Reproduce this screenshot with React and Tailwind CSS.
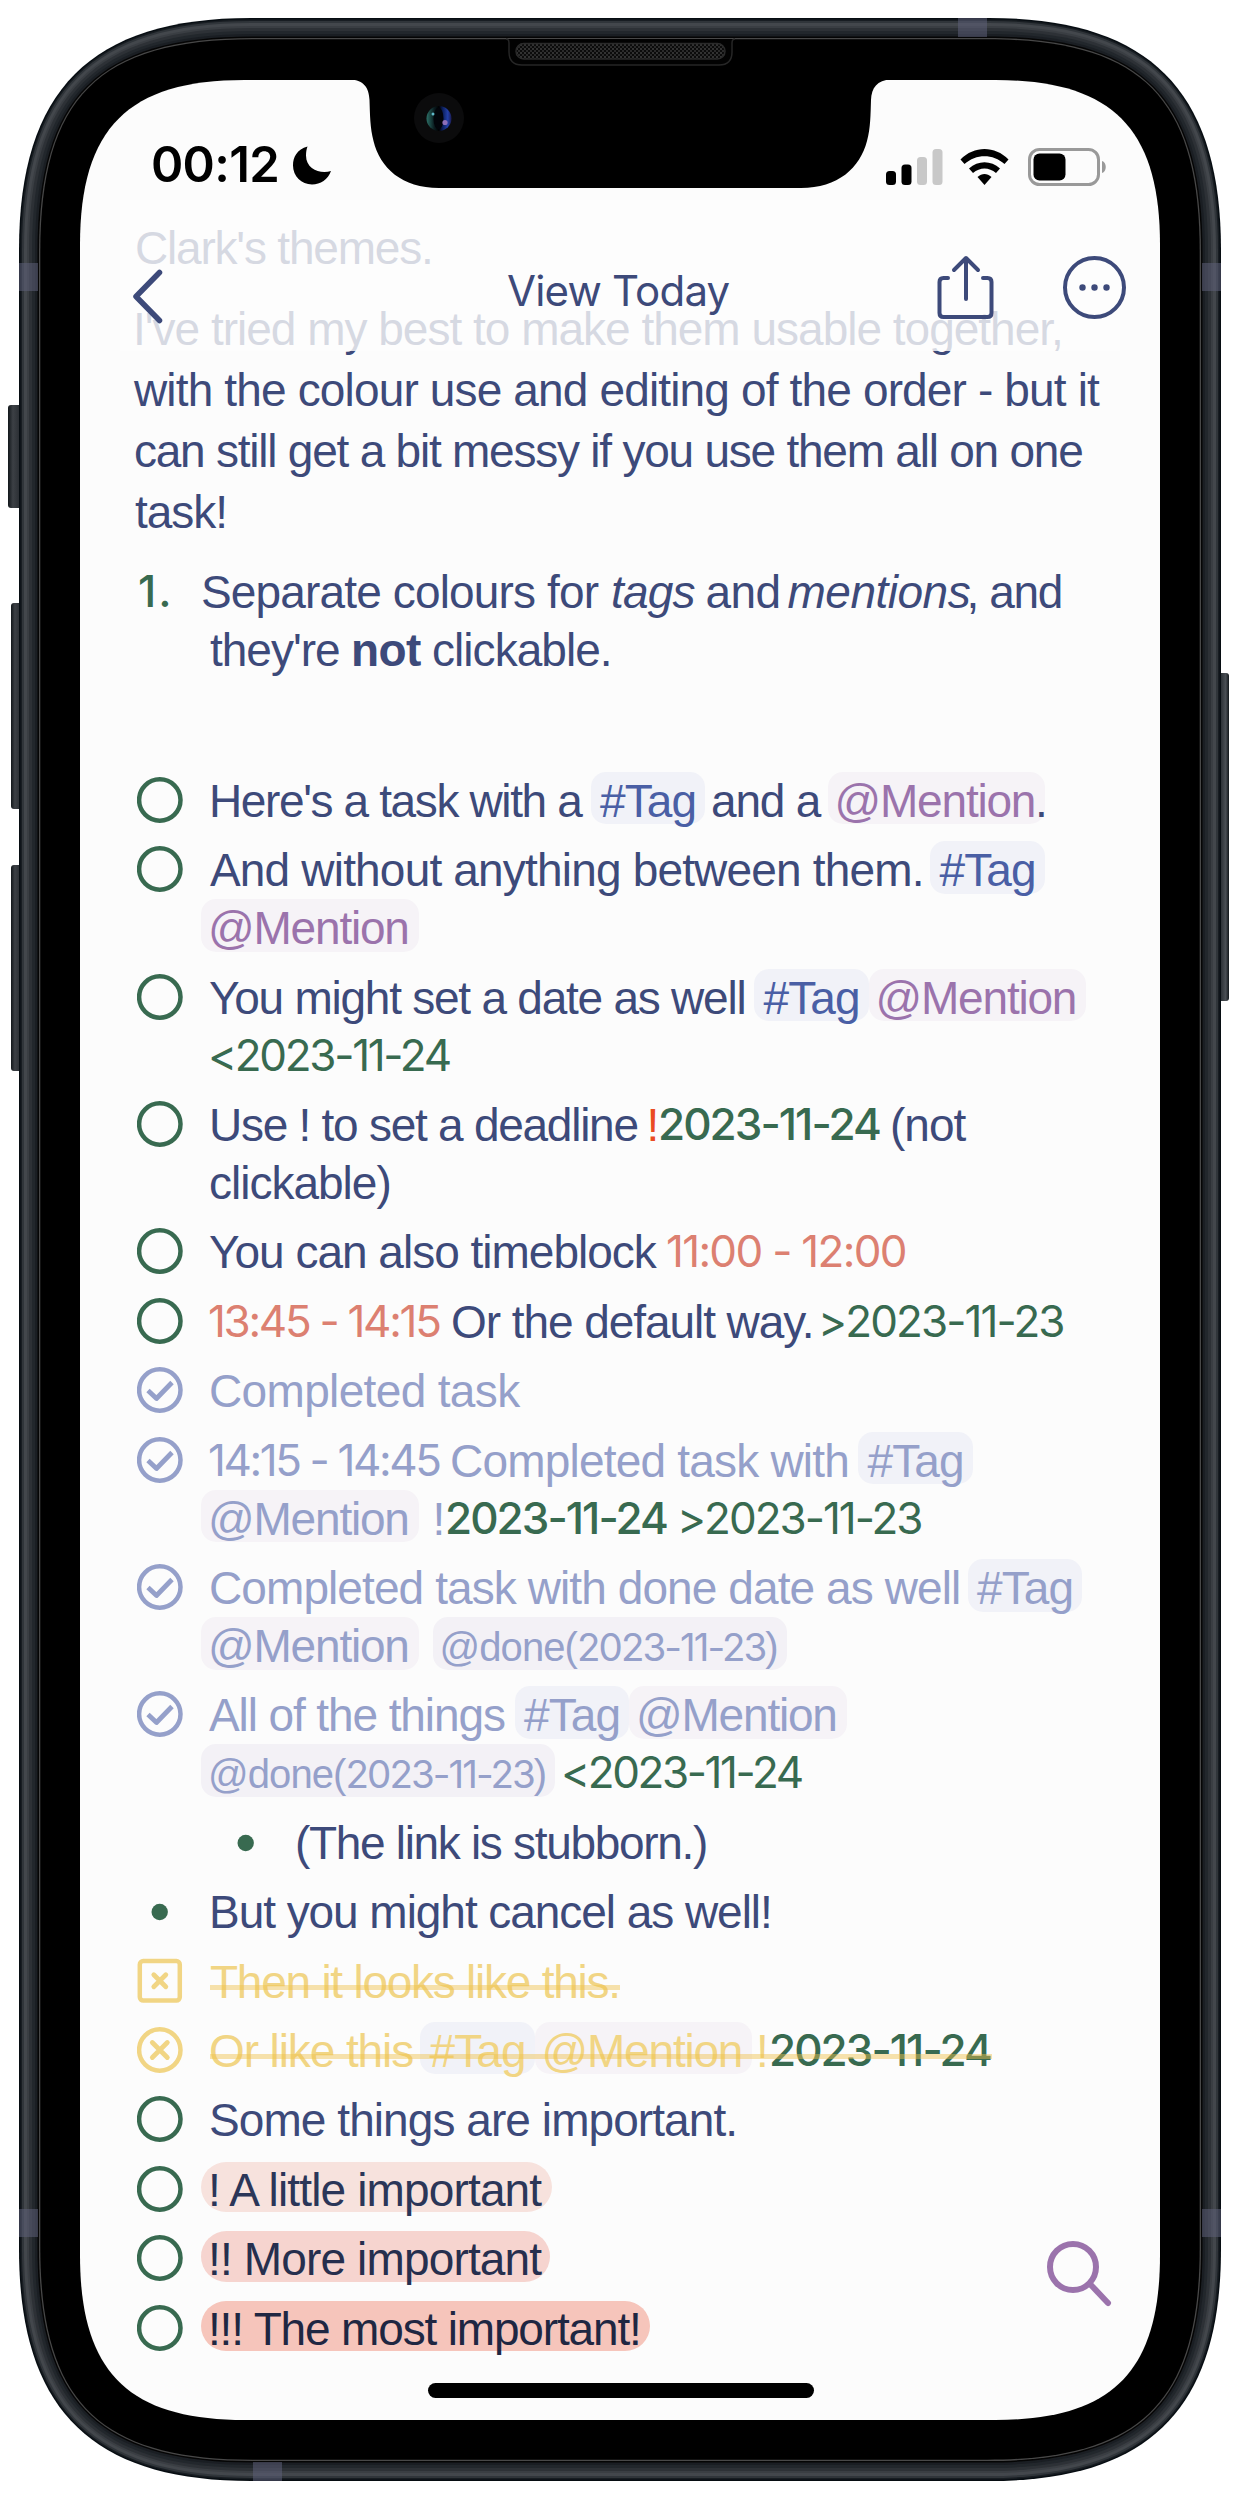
// Closed outline with continuous (squircle) corners.
function squircle(l, t, r, b, e, c) {
  return [
    `M${l + e} ${t}H${r - e}`,
    `C${r - c} ${t} ${r} ${t + c} ${r} ${t + e}`,
    `V${b - e}`,
    `C${r} ${b - c} ${r - c} ${b} ${r - e} ${b}`,
    `H${l + e}`,
    `C${l + c} ${b} ${l} ${b - c} ${l} ${b - e}`,
    `V${t + e}`,
    `C${l} ${t + c} ${l + c} ${t} ${l + e} ${t}Z`,
  ].join("");
}

const SANS = "font-['Liberation_Sans',Arial,sans-serif]";

const RINGS = [
  [0, "#070d12"],
  [1.5, "#181d22"],
  [3, "#30353a"],
  [5, "#43474c"],
  [8, "#3a3e43"],
  [10, "#2d3136"],
  [13, "#22272c"],
  [16, "#1a1e23"],
  [18.5, "#050505"],
  [20, "#484848"],
  [21.3, "#000000"],
];

function Chassis() {
  return (
    <svg className="absolute inset-0" width="1240" height="2500" viewBox="0 0 1240 2500" aria-hidden="true">
      <defs>
        <linearGradient id="btnL" x1="0" x2="1" y1="0" y2="0">
          <stop offset="0" stopColor="#12171b" />
          <stop offset=".35" stopColor="#3c4045" />
          <stop offset="1" stopColor="#24282d" />
        </linearGradient>
        <linearGradient id="btnR" x1="1" x2="0" y1="0" y2="0">
          <stop offset="0" stopColor="#12171b" />
          <stop offset=".3" stopColor="#4a4f55" />
          <stop offset="1" stopColor="#1a1f24" />
        </linearGradient>
        <linearGradient id="lens" x1="0" x2="1" y1="0" y2="0">
          <stop offset="0" stopColor="#2c6f66" />
          <stop offset=".3" stopColor="#0a1c20" />
          <stop offset=".5" stopColor="#000000" />
          <stop offset=".65" stopColor="#0b1f5c" />
          <stop offset=".85" stopColor="#2340a8" />
          <stop offset="1" stopColor="#1a1a50" />
        </linearGradient>
        <pattern id="mesh" width="4" height="4" patternUnits="userSpaceOnUse">
          <rect width="4" height="4" fill="#0b0b0b" />
          <rect width="2" height="2" fill="#323232" />
          <rect x="2" y="2" width="2" height="2" fill="#2a2a2a" />
        </pattern>
      </defs>
      <rect x="8" y="405" width="14" height="103" rx="3" fill="url(#btnL)" />
      <rect x="11" y="603" width="11" height="206" rx="3" fill="url(#btnL)" />
      <rect x="11" y="865" width="11" height="206" rx="3" fill="url(#btnL)" />
      <rect x="1218" y="673" width="11" height="328" rx="3" fill="url(#btnR)" />
      {RINGS.map(([i, fill]) => (
        <path key={i} fill={fill} d={squircle(19 + i, 18 + i, 1221 - i, 2481 - i, 232 - i * 0.9, 72 - i * 0.65)} />
      ))}
      <g fill="#5c5f78" fillOpacity=".55">
        <rect x="19" y="263" width="19" height="28" />
        <rect x="1202" y="263" width="19" height="28" />
        <rect x="19" y="2209" width="19" height="28" />
        <rect x="1202" y="2209" width="19" height="28" />
        <rect x="958" y="18" width="29" height="19" />
        <rect x="253" y="2462" width="29" height="19" />
      </g>
      <path fill="#fcfcfc" d={squircle(80, 80, 1160, 2420, 165, 48)} />
      <path
        fill="#000"
        d="M350 79.500C364 80 369 88 369.500 100C370 115 370 128 373.500 141C380 168 402 188 439 188H801C838 188 860 168 867 141C870.500 128 870.500 115 871 100C871.500 88 877 80 891 79.500Z"
      />
      <path d="M506 39Q509 39 509 43V52Q509 65 522 65H719Q732 65 732 52V43Q732 39 735 39" fill="#020202" stroke="#262626" strokeWidth="1.500" />
      <rect x="516" y="43.500" width="209" height="15.500" rx="7.750" fill="url(#mesh)" stroke="#2a2a2a" strokeWidth="1.500" />
      <circle cx="439" cy="118" r="25" fill="#0b0b0c" />
      <circle cx="439" cy="118.500" r="12.500" fill="url(#lens)" />
      <ellipse cx="438.500" cy="118.500" rx="5" ry="11" fill="#02040a" />
      <circle cx="445" cy="122.500" r="2.600" fill="#8d6fb8" />
      <circle cx="433" cy="114" r="1.500" fill="#5fb8c8" />
    </svg>
  );
}

function StatusBar() {
  return (
    <div className="flex h-[110px] items-end justify-between pl-[71px] pr-[54px]">
      <div className="flex h-[50px] items-center gap-[14px] text-black">
        <span className="w-[127px] whitespace-nowrap font-['Inter',sans-serif] text-[49px] leading-[50px] font-semibold tracking-[-0.700px]">00:12</span>
        <svg width="40" height="40" viewBox="0 0 40 40" className="mt-[2px]">
          <path d="M15.500 0.500C5 3.500 1 11 1 19.500C1 30 9.500 38.500 20 38.500C28.500 38.500 36 33.500 39 25C29 28.500 14 23.500 14 9.500C14 6 14.500 3 15.500 0.500Z" fill="#000" />
        </svg>
      </div>
      <div className="flex h-[47px] items-center">
        <svg width="222" height="40" viewBox="0 0 222 40">
          <rect x="2" y="24" width="10" height="14" rx="3.500" />
          <rect x="17.500" y="17.500" width="10" height="20.500" rx="3.500" />
          <rect x="33" y="10" width="10" height="28" rx="3.500" fill="#c8c8c8" />
          <rect x="48.500" y="2" width="10" height="36" rx="3.500" fill="#c8c8c8" />
          <path d="M76.500 12.500L80.500 17C92 6.500 109 6.500 120.500 17L124.500 12.500C111 -1.500 90 -1.500 76.500 12.500Z" />
          <path d="M85 21.500L89 26C96 20 105 20 112 26L116 21.500C107 13 94 13 85 21.500Z" />
          <path d="M93.500 30C98 26 103 26 107.500 30L100.500 38Z" />
          <rect x="145.500" y="2.500" width="69" height="35" rx="10" fill="none" stroke="#999" strokeWidth="3" />
          <rect x="149.500" y="6.500" width="32" height="27" rx="6" />
          <path d="M218 14C223 15 223 25 218 26Z" fill="#999" />
        </svg>
      </div>
    </div>
  );
}

function NavBar() {
  return (
    <div className="flex h-[161px] items-start text-[#3d4a7a]">
      <svg className="mt-[79px] ml-[50px]" width="36" height="56" viewBox="0 0 36 56" fill="none" stroke="currentColor" strokeWidth="5.500" strokeLinecap="round" strokeLinejoin="round">
        <path d="M29.500 3.500L6 27.500L29.500 51.500" />
      </svg>
      <h1 className="mt-[75px] ml-[341px] w-[430px] whitespace-nowrap font-['Inter',sans-serif] text-[42px] leading-[52px] tracking-[-0.800px]">View Today</h1>
      <svg className="mt-[64px]" width="58" height="68" viewBox="0 0 58 68" fill="none" stroke="currentColor" strokeWidth="4" strokeLinecap="round" strokeLinejoin="round">
        <path d="M11 24H6.500Q2.500 24 2.500 28V59Q2.500 63 6.500 63H50.500Q54.500 63 54.500 59V28Q54.500 24 50.500 24H46" />
        <path d="M29 45V5M17 16L29 4L41 16" />
      </svg>
      <svg className="mt-[64px] ml-[67px]" width="66" height="68" viewBox="0 0 66 68" fill="none" stroke="currentColor" strokeWidth="4">
        <circle cx="32.500" cy="33.500" r="29.500" />
        <g fill="currentColor" stroke="none">
          <circle cx="20.500" cy="33.500" r="3.200" />
          <circle cx="32.500" cy="33.500" r="3.200" />
          <circle cx="44.500" cy="33.500" r="3.200" />
        </g>
      </svg>
    </div>
  );
}

const OpenCircle = () => (
  <svg width="46" height="46" viewBox="0 0 46 46" fill="none" stroke="#386a50" strokeWidth="4.500">
    <circle cx="22.800" cy="23" r="20.700" />
  </svg>
);

const DoneCircle = () => (
  <svg width="46" height="46" viewBox="0 0 46 46" fill="none" stroke="#95a0ca" strokeWidth="4.500">
    <circle cx="22.800" cy="23" r="20.700" />
    <path d="M11 23.500L19.500 31.500L35 15.500" strokeWidth="4.800" strokeLinejoin="round" />
  </svg>
);

const CancelCircle = () => (
  <svg width="46" height="46" viewBox="0 0 46 46" fill="none" stroke="#f1d584" strokeWidth="4.500">
    <circle cx="22.800" cy="23" r="20.700" />
    <path d="M15.300 15.500L30.300 30.500M30.300 15.500L15.300 30.500" strokeWidth="4.800" strokeLinecap="round" />
  </svg>
);

const CancelSquare = () => (
  <svg width="46" height="46" viewBox="0 0 46 46" fill="none" stroke="#f1d584" strokeWidth="4.500">
    <rect x="2.800" y="3.100" width="40" height="39.500" rx="3.500" />
    <path d="M16.800 16.800L28.800 28.800M28.800 16.800L16.800 28.800" strokeWidth="4.800" strokeLinecap="round" />
  </svg>
);

const Dot = () => (
  <svg width="46" height="46" viewBox="0 0 46 46" fill="#386a50">
    <circle cx="22.700" cy="24" r="8.200" />
  </svg>
);

const T = ({ c = "", children }) => <span className={`block shrink-0 ${c}`}>{children}</span>;

const D = ({ c = "", children }) => (
  <span className={`-mt-px block shrink-0 font-['Inter',sans-serif] text-[44px] ${c}`}>{children}</span>
);

const Tag = ({ c = "text-[#4a5fa5]" }) => (
  <span className={`block h-[52.5px] w-[114.5px] shrink-0 rounded-[15px] bg-[#f1f2f8] pl-[9.5px] tracking-[-0.9px] ${c}`}>#Tag</span>
);

const Mention = ({ c = "text-[#9b73ac]" }) => (
  <span className={`block h-[52.5px] w-[217.5px] shrink-0 rounded-[15px] bg-[#f6f3f7] pl-[7px] tracking-[-1.2px] ${c}`}>@Mention</span>
);

const DoneDate = () => (
  <span className="flex h-[53px] w-[354px] shrink-0 rounded-[15px] bg-[#f3f1f6] pl-[7px]">
    <span className="block text-[40px] leading-[61px] tracking-[-0.9px]">@done(</span>
    <span className="block font-['Inter',sans-serif] text-[38.5px] leading-[60px] tracking-[-1.95px]">2023-11-23</span>
    <span className="block text-[40px] leading-[61px]">)</span>
  </span>
);

const Line = ({ c = "", children }) => <div className={`flex h-[58px] items-start ${c}`}>{children}</div>;

const Item = ({ icon, c = "", children }) => (
  <li className={`flex items-start ${c}`}>
    <span className="mt-[5px] mr-[25px] block shrink-0">{icon}</span>
    <div className="flex flex-col">{children}</div>
  </li>
);

const GREEN = "text-[#386a50]";

function Note() {
  return (
    <div className={`pt-[138.4px] pl-[57px] text-[46px] whitespace-nowrap text-[#3d4a7a] ${SANS}`}>
      <div className="-ml-[2px] leading-[61px]">
        <p className="tracking-[-1.2px]">Clark's themes.</p>
        <p className="mt-[20px] flex flex-col">
          <span className="-ml-[2px] tracking-[-1px]">I've tried my best to make them usable together,</span>
          <span className="-ml-px tracking-[-0.85px]">with the colour use and editing of the order - but it</span>
          <span className="-ml-px tracking-[-1.23px]">can still get a bit messy if you use them all on one</span>
          <span className="tracking-[-1px]">task!</span>
        </p>
      </div>
      <div className="mt-[19.5px] leading-[58px]">
        <Line>
          <D c={`w-[64px] pl-px font-medium tracking-[2px] ${GREEN}`}>1.</D>
          <T c="w-[410px] tracking-[-0.85px]">Separate colours for</T>
          <T c="w-[94.5px] italic tracking-[-0.8px]">tags</T>
          <T c="w-[82px] tracking-[-0.6px]">and</T>
          <T c="w-[179px] italic tracking-[-0.5px]">mentions</T>
          <T c="tracking-[-1.4px]">, and</T>
        </Line>
        <Line c="pl-[73px]">
          <T c="w-[141px] tracking-[-1px]">they're</T>
          <T c="w-[81px] font-bold tracking-[-0.6px]">not</T>
          <T c="tracking-[-0.95px]">clickable.</T>
        </Line>
      </div>
      <ul className="mt-[93px] flex flex-col gap-[11.4px] leading-[58px]">
        <Item icon={<OpenCircle />}>
          <Line>
            <T c="w-[382.5px] pl-px tracking-[-1.38px]">Here's a task with a</T>
            <Tag />
            <T c="w-[122.5px] pl-[6px] tracking-[-1.2px]">and a</T>
            <Mention />
            <T c="-ml-[10px]">.</T>
          </Line>
        </Item>
        <Item icon={<OpenCircle />}>
          <Line>
            <T c="w-[722px] pl-[2px] tracking-[-0.82px]">And without anything between them.</T>
            <Tag />
          </Line>
          <Line c="-ml-[7px]">
            <Mention />
          </Line>
        </Item>
        <Item icon={<OpenCircle />}>
          <Line>
            <T c="w-[546px] pl-px tracking-[-1.24px]">You might set a date as well</T>
            <Tag />
            <Mention />
          </Line>
          <Line>
            <D c={`tracking-[-2.3px] ${GREEN}`}>&lt;2023-11-24</D>
          </Line>
        </Item>
        <Item icon={<OpenCircle />}>
          <Line>
            <T c="w-[438.5px] pl-px tracking-[-1.26px]">Use ! to set a deadline</T>
            <T c="w-[11.5px] text-[#ea4b22]">!</T>
            <D c={`w-[232px] font-medium tracking-[-1.95px] ${GREEN}`}>2023-11-24</D>
            <T c="tracking-[-1px]">(not</T>
          </Line>
          <Line>
            <T c="pl-px tracking-[-1px]">clickable)</T>
          </Line>
        </Item>
        <Item icon={<OpenCircle />}>
          <Line>
            <T c="w-[458px] pl-px tracking-[-1px]">You can also timeblock</T>
            <D c="tracking-[-1.7px] text-[#dc8071]">11:00 - 12:00</D>
          </Line>
        </Item>
        <Item icon={<OpenCircle />}>
          <Line>
            <D c="w-[243px] tracking-[-2.3px] text-[#dc8071]">13:45 - 14:15</D>
            <T c="w-[367px] tracking-[-1.06px]">Or the default way.</T>
            <D c={`tracking-[-1.9px] ${GREEN}`}>&gt;2023-11-23</D>
          </Line>
        </Item>
        <Item icon={<DoneCircle />} c="text-[#95a0ca]">
          <Line>
            <T c="pl-px tracking-[-0.65px]">Completed task</T>
          </Line>
        </Item>
        <Item icon={<DoneCircle />} c="text-[#95a0ca]">
          <Line>
            <D c="w-[242px] tracking-[-2.4px]">14:15 - 14:45</D>
            <T c="w-[408px] tracking-[-0.8px]">Completed task with</T>
            <Tag c="" />
          </Line>
          <Line c="-ml-[7px]">
            <Mention c="" />
            <T c="w-[26.5px] pl-[14px]">!</T>
            <D c={`w-[232px] font-medium tracking-[-1.95px] ${GREEN}`}>2023-11-24</D>
            <D c={`tracking-[-2px] ${GREEN}`}>&gt;2023-11-23</D>
          </Line>
        </Item>
        <Item icon={<DoneCircle />} c="text-[#95a0ca]">
          <Line>
            <T c="w-[759.5px] pl-px tracking-[-0.91px]">Completed task with done date as well</T>
            <Tag c="" />
          </Line>
          <Line c="-ml-[7px] gap-[14px]">
            <Mention c="" />
            <DoneDate />
          </Line>
        </Item>
        <Item icon={<DoneCircle />} c="text-[#95a0ca]">
          <Line>
            <T c="w-[306.500px] pl-px tracking-[-1.1px]">All of the things</T>
            <Tag c="" />
            <Mention c="" />
          </Line>
          <Line c="-ml-[7px]">
            <DoneDate />
            <D c={`pl-[6px] tracking-[-2.4px] ${GREEN}`}>&lt;2023-11-24</D>
          </Line>
        </Item>
        <Item icon={<Dot />} c="pl-[86px]">
          <Line>
            <T c="pl-px tracking-[-1.32px]">(The link is stubborn.)</T>
          </Line>
        </Item>
        <Item icon={<Dot />}>
          <Line>
            <T c="pl-px tracking-[-1.05px]">But you might cancel as well!</T>
          </Line>
        </Item>
        <Item icon={<CancelSquare />} c="text-[#f1d584]">
          <div className="relative">
            <Line>
              <T c="pl-[2px] tracking-[-1.25px]">Then it looks like this.</T>
            </Line>
            <span className="absolute top-[32px] left-[2px] h-[5.500px] w-[410px] bg-[#efc24a]/45" />
          </div>
        </Item>
        <Item icon={<CancelCircle />} c="text-[#f1d584]">
          <div className="relative">
            <Line>
              <T c="w-[212px] pl-px tracking-[-1.1px]">Or like this</T>
              <Tag c="" />
              <Mention c="" />
              <T c="w-[17px] pl-[4px]">!</T>
              <D c={`font-medium tracking-[-1.95px] ${GREEN}`}>2023-11-24</D>
            </Line>
            <span className="absolute top-[32px] left-[2px] h-[5.500px] w-[782px] bg-[#efc24a]/45" />
          </div>
        </Item>
        <Item icon={<OpenCircle />}>
          <Line>
            <T c="pl-px tracking-[-0.93px]">Some things are important.</T>
          </Line>
        </Item>
        <Item icon={<OpenCircle />}>
          <Line c="-ml-[7px]">
            <T c="mt-px h-[50.500px] w-[351px] rounded-full bg-[#f7e2dd] pl-[7px] leading-[56px] tracking-[-0.85px] text-[#2b3658]">! A little important</T>
          </Line>
        </Item>
        <Item icon={<OpenCircle />}>
          <Line c="-ml-[7px]">
            <T c="mt-px h-[50.500px] w-[349px] rounded-full bg-[#f6d4cf] pl-[7px] leading-[56px] tracking-[-0.85px] text-[#262f4e]">!! More important</T>
          </Line>
        </Item>
        <Item icon={<OpenCircle />}>
          <Line c="-ml-[7px]">
            <T c="mt-px h-[50.500px] w-[449px] rounded-full bg-[#f6c5bb] pl-[7px] leading-[56px] tracking-[-1.16px] text-[#1f2742]">!!! The most important!</T>
          </Line>
        </Item>
      </ul>
    </div>
  );
}

export default function App() {
  return (
    <div className="relative h-[2500px] w-[1240px] overflow-hidden bg-white p-[80px]">
      <Chassis />
      <main className="relative h-[2340px] w-[1080px]">
        <Note />
        <header className="absolute inset-x-0 top-0 h-[271px]">
          <div className="absolute inset-x-[40px] top-[120px] bottom-0 bg-[#fcfcfc]/80" />
          <div className="relative">
            <StatusBar />
            <NavBar />
          </div>
        </header>
        <svg className="absolute right-[46px] bottom-[110px]" width="70" height="70" viewBox="0 0 70 70" fill="none" stroke="#9b73ac" strokeWidth="6" strokeLinecap="round">
          <circle cx="29" cy="27" r="23" />
          <path d="M46 44L64 63" />
        </svg>
        <div className="absolute bottom-[22.500px] left-[348px] h-[15px] w-[386px] rounded-full bg-black" />
      </main>
    </div>
  );
}
